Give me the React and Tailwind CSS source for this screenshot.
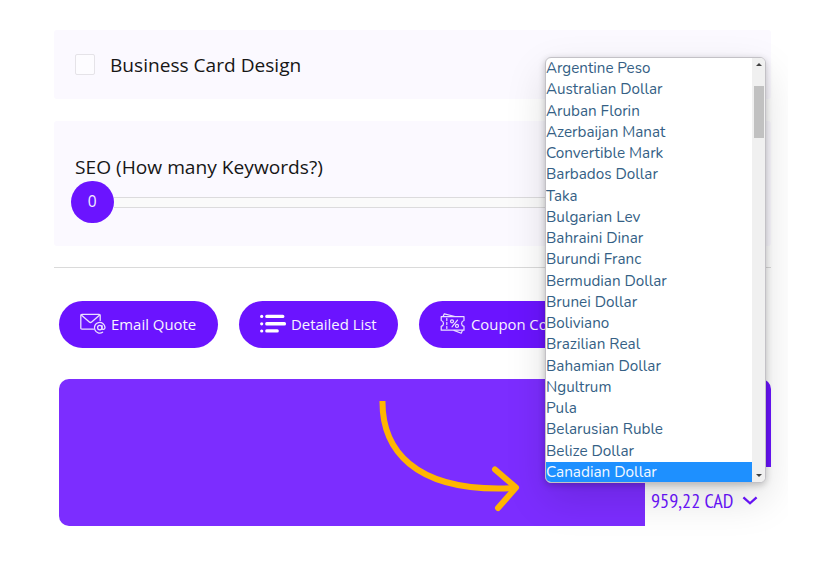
import React from "react";

const currencies = [
  ["Argentine Peso", 104.5],
  ["Australian Dollar", 116.5],
  ["Aruban Florin", 93.5],
  ["Azerbaijan Manat", 119.5],
  ["Convertible Mark", 117],
  ["Barbados Dollar", 112],
  ["Taka", 31.5],
  ["Bulgarian Lev", 94],
  ["Bahraini Dinar", 97.5],
  ["Burundi Franc", 95.5],
  ["Bermudian Dollar", 120.5],
  ["Brunei Dollar", 91],
  ["Boliviano", 63.5],
  ["Brazilian Real", 94],
  ["Bahamian Dollar", 115],
  ["Ngultrum", 65.5],
  ["Pula", 31],
  ["Belarusian Ruble", 117],
  ["Belize Dollar", 88],
  ["Canadian Dollar", 110.5],
];

// Scales its text horizontally so that it fills the given width.
function FitText({ width, children }) {
  const ref = React.useRef(null);
  const [scale, setScale] = React.useState(1);
  React.useLayoutEffect(() => {
    const fit = () => setScale(width / ref.current.offsetWidth);
    fit();
    document.fonts?.ready.then(fit);
  }, [width]);
  return (
    <span ref={ref} className="inline-block origin-left whitespace-nowrap" style={{ transform: `scaleX(${scale})` }}>
      {children}
    </span>
  );
}

function MailIcon() {
  return (
    <svg className="h-[22px] w-[26px] shrink-0" viewBox="0 0 26 22" fill="none" stroke="#eadfff" strokeWidth="1.3" strokeLinecap="round" strokeLinejoin="round">
      <path d="M13.5 16.2H2Q.8 16.2 .8 15V2.6Q.8 1.4 2 1.4H19Q20.2 1.4 20.2 2.6V7.4" />
      <path d="M1.3 2 9.3 9Q10.5 10.1 11.7 9L19.7 2" />
      <circle cx="19.8" cy="14.6" r="2.2" />
      <path d="M22 12.4V15.2Q22.2 16.8 23.7 16.3Q25 15.7 25 14.4A5.3 5.3 0 1 0 22.6 19.2" />
    </svg>
  );
}

function ListIcon() {
  return (
    <svg className="h-[20px] w-[26px] shrink-0" viewBox="0 0 26 20" fill="#fff">
      <circle cx="1.7" cy="2.4" r="1.6" />
      <circle cx="1.7" cy="9.8" r="1.6" />
      <circle cx="1.7" cy="17" r="1.6" />
      <rect x="5.2" y=".8" width="19.2" height="3.3" rx="1.5" />
      <rect x="5.2" y="8.1" width="20.8" height="3.3" rx="1.5" />
      <rect x="5.2" y="15.3" width="13.6" height="3.3" rx="1.5" />
    </svg>
  );
}

function CouponIcon() {
  return (
    <svg className="h-[22px] w-[26px] shrink-0" viewBox="0 0 26 22" fill="none" stroke="#eadfff" strokeWidth="1.2" strokeLinecap="round" strokeLinejoin="round">
      <path d="M1.2 3.7H24V7.5Q21.6 8.2 21.6 10.4Q21.6 12.6 24 13.4V17.2H1.2V13.4Q3.5 12.6 3.5 10.4Q3.5 8.2 1.2 7.5Z" />
      <path d="M3.1 3.5 4.3.8 15 3.5M14 17.4 21.2 20.2 22.4 17.4" />
      <path d="M6.8 5.4V15.8" strokeDasharray="2 2" />
      <circle cx="12" cy="8.3" r="1.5" />
      <circle cx="17" cy="12.9" r="1.5" />
      <path d="M17.5 7.2 12 13.9" />
    </svg>
  );
}

function ActionButton({ icon, children }) {
  return (
    <button className="flex h-[47px] w-[158.5px] shrink-0 items-center gap-[5px] rounded-full bg-[#6b14ff] pl-[21px] text-[15px] whitespace-nowrap text-[#f8f4ff]">
      {icon}
      {children}
    </button>
  );
}

export default function App() {
  return (
    <div className="relative h-[574px] w-[826px] overflow-hidden bg-white pt-[30px] pl-[54px] font-['Open_Sans','Noto_Sans',sans-serif] text-[#161616]">
      <div className="w-[717px]">
        <div className="flex h-[68.5px] items-center rounded-[3px] bg-[#fbf9ff] pl-[21px]">
          <div className="h-[21px] w-[20px] rounded-[2px] border border-[#e5e3e8] bg-[#fdfcff]" />
          <span className="mt-px ml-[14.5px] text-[19px]"><FitText width={191}>Business Card Design</FitText></span>
        </div>

        <div className="mt-[22.5px] h-[124.5px] rounded-[3px] bg-[#fbf9ff] pt-[32px] pl-[21px]">
          <div className="h-[28px] text-[19px] leading-[28px]"><FitText width={248}>SEO (How many Keywords?)</FitText></div>
          <div className="-ml-1 flex h-[42px] items-center">
            <div className="flex size-[42.5px] shrink-0 items-center justify-center rounded-full bg-[#6b14ff] text-[15.5px] text-[#f4eeff]">0</div>
            <div className="h-[11px] w-[620px] border-y border-[#dcdbdd] bg-[#fafafa]" />
          </div>
        </div>

        <div className="mt-[21px] h-px bg-[#dadada]" />

        <div className="mt-[33px] ml-[5px] flex gap-[21.5px]">
          <ActionButton icon={<MailIcon />}><FitText width={85.5}>Email Quote</FitText></ActionButton>
          <ActionButton icon={<ListIcon />}><FitText width={85.5}>Detailed List</FitText></ActionButton>
          <ActionButton icon={<CouponIcon />}><FitText width={94}>Coupon Code</FitText></ActionButton>
        </div>

        <div className="mt-[31.5px] ml-[5px] flex h-[146.5px]">
          <div className="w-[586px] rounded-l-[10px] bg-[#7c2dff]" />
          <div className="w-[126px]">
            <div className="h-[88px] rounded-tr-[10px] bg-[#6b14ff]" />
            <div className="flex h-[58px] items-center pt-[9px] pl-[6px] text-[#6b14ff]">
              <div className="w-[83px] font-['PT_Sans_Narrow','Open_Sans',sans-serif] text-[19px] leading-[24px]"><FitText width={83}>959,22 CAD</FitText></div>
              <svg className="ml-[8px] h-[10px] w-[16px]" viewBox="0 0 16 10" fill="none" stroke="currentColor" strokeWidth="2.3">
                <path d="M1.4 1.3 8 7.3 14.6 1.3" />
              </svg>
            </div>
          </div>
        </div>
      </div>

      <svg className="absolute top-[396px] left-[374px] h-[120px] w-[150px]" viewBox="0 0 150 120" fill="none" stroke="#ffb600" strokeWidth="6" strokeLinejoin="round">
        <path d="M8.5 5C8 50 36 98 142 92" />
        <path d="M121 73.5 142 91.5 124 112" strokeLinecap="round" />
      </svg>

      <div className="absolute inset-y-0 left-0 w-[788px] overflow-hidden">
        <div className="absolute top-[57px] left-[545px] flex h-[426px] w-[221px] overflow-hidden rounded-[6px] border border-[#c3c1c6] bg-white shadow-[0_16px_40px_rgba(0,0,0,0.13),0_2px_7px_rgba(0,0,0,0.22)]">
          <div className="w-[206px] font-['Nunito',Lato,sans-serif] text-[15.8px] text-[#355f85]">
            {currencies.map(([name, width], i) => (
              <div
                key={name}
                className={i === currencies.length - 1 ? "h-[22px] bg-[#1e90ff] leading-[20px] text-[#f4f9ff]" : "h-[21.25px] leading-[20px]"}
              >
                <FitText width={width}>{name}</FitText>
              </div>
            ))}
          </div>
          <div className="flex flex-1 flex-col items-center bg-[#f0f0f0]">
            <svg className="mt-[5px] h-[3px] w-[6px]" viewBox="0 0 6 3" fill="#404040"><path d="M0 3 3 0 6 3Z" /></svg>
            <div className="mt-[20px] h-[52px] w-[10px] bg-[#c1c1c1]" />
            <svg className="mt-auto mb-[5px] h-[3px] w-[6px]" viewBox="0 0 6 3" fill="#404040"><path d="M0 0 3 3 6 0Z" /></svg>
          </div>
        </div>
      </div>
    </div>
  );
}
